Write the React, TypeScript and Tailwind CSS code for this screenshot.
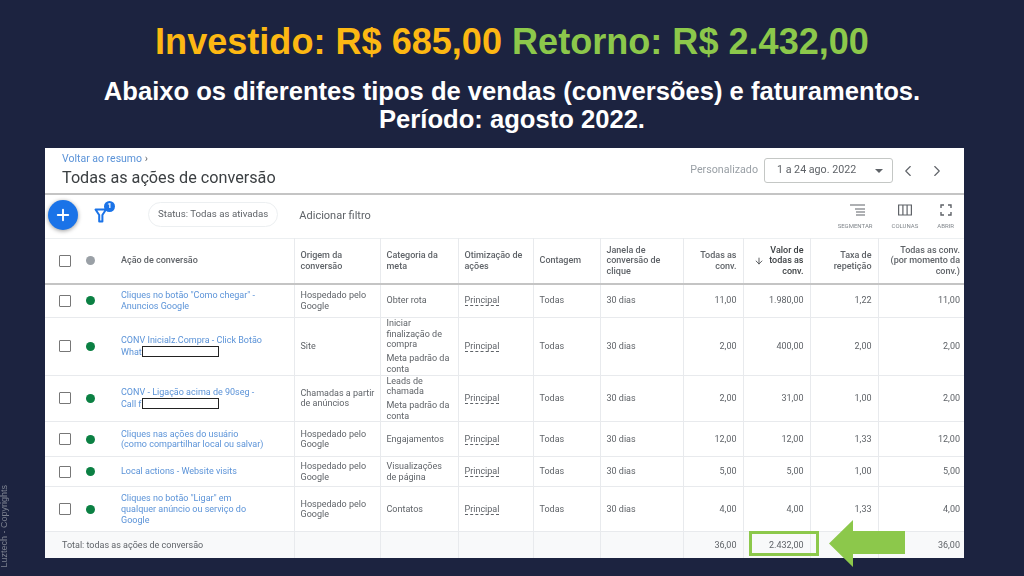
import { ArrowDown, ChevronLeft, ChevronRight, Plus } from "lucide-react";

type Row = {
  name: React.ReactNode;
  origin: React.ReactNode;
  category: React.ReactNode;
  count: string;
  value: string;
  rate: string;
  height: string;
};

const Redacted = () => (
  <span className="inline-block w-[77px] h-[11px] -mb-[2px] bg-white border border-[#222] align-baseline" />
);

const rows: Row[] = [
  {
    name: <>Cliques no botão "Como chegar" -<br />Anuncios Google</>,
    origin: "Hospedado pelo Google",
    category: "Obter rota",
    count: "11,00",
    value: "1.980,00",
    rate: "1,22",
    height: "h-[34px]",
  },
  {
    name: <>CONV Inicialz.Compra - Click Botão<br />What<Redacted /></>,
    origin: "Site",
    category: (
      <>
        Iniciar<br />finalização de<br />compra
        <div className="mt-[3px]">Meta padrão da conta</div>
      </>
    ),
    count: "2,00",
    value: "400,00",
    rate: "2,00",
    height: "h-[57px]",
  },
  {
    name: <>CONV - Ligação acima de 90seg -<br />Call f<Redacted /></>,
    origin: <span className="whitespace-nowrap">Chamadas a partir<br />de anúncios</span>,
    category: (
      <>
        Leads de chamada
        <div className="mt-[3px]">Meta padrão da conta</div>
      </>
    ),
    count: "2,00",
    value: "31,00",
    rate: "1,00",
    height: "h-[46px]",
  },
  {
    name: <>Cliques nas ações do usuário<br />(como compartilhar local ou salvar)</>,
    origin: "Hospedado pelo Google",
    category: "Engajamentos",
    count: "12,00",
    value: "12,00",
    rate: "1,33",
    height: "h-[35px]",
  },
  {
    name: "Local actions - Website visits",
    origin: "Hospedado pelo Google",
    category: "Visualizações de página",
    count: "5,00",
    value: "5,00",
    rate: "1,00",
    height: "h-[30px]",
  },
  {
    name: <>Cliques no botão "Ligar" em<br />qualquer anúncio ou serviço do<br />Google</>,
    origin: "Hospedado pelo Google",
    category: "Contatos",
    count: "4,00",
    value: "4,00",
    rate: "1,33",
    height: "h-[45px]",
  },
];

const Checkbox = () => (
  <span className="block w-[12px] h-[12px] rounded-[1px] border-[1.5px] border-[#777]" />
);

const th = "border-l border-[#e8eaed] px-[6px] font-medium align-middle";
const td = "border-l border-[#e8eaed] px-[6px] align-middle";

function ToolButton({ label, children }: { label: string; children: React.ReactNode }) {
  return (
    <div className="flex flex-col items-center gap-[6px]">
      {children}
      <span className="text-[6px] leading-[7px] text-[#80868b]">{label}</span>
    </div>
  );
}

export default function App() {
  return (
    <div className="relative w-[1024px] h-[576px] overflow-hidden bg-[#1c2340] font-['Liberation_Sans',sans-serif]">
      <div className="pt-[21px] text-center font-bold">
        <h1 className="text-[36.1px] leading-[42px]">
          <span className="text-[#fdb813]">Investido: R$ 685,00</span>{" "}
          <span className="text-[#8cc84b]">Retorno: R$ 2.432,00</span>
        </h1>
        <p className="mt-[14px] text-[25.6px] leading-[28px] text-white">
          Abaixo os diferentes tipos de vendas (conversões) e faturamentos.
          <br />
          Período: agosto 2022.
        </p>
      </div>

      <div className="relative ml-[45px] mt-[15px] w-[919px] h-[409px]">
        <div className="h-full bg-white font-['Roboto',sans-serif] text-[#5f6368] blur-[0.5px]">
          {/* Title bar */}
          <div className="flex h-[47px] items-center border-b-2 border-[#c4c4c4] pl-[17px] pr-[21px]">
            <div>
              <div className="text-[10.5px] leading-[12px] text-[#5b93d8]">
                Voltar ao resumo <span className="text-[#5f6368]">›</span>
              </div>
              <div className="mt-[3px] text-[16.2px] leading-[20px] text-[#3c4043]">Todas as ações de conversão</div>
            </div>
            <div className="ml-auto flex items-center">
              <span className="text-[10.7px] text-[#9aa0a6]">Personalizado</span>
              <div className="ml-[6px] flex h-[25px] w-[129px] items-center rounded-[3px] border border-[#c4c7c5] pl-[12px] pr-[9px] text-[10.7px] text-[#5f6368]">
                1 a 24 ago. 2022
                <span className="ml-auto h-0 w-0 border-x-[4px] border-t-[4px] border-x-transparent border-t-[#5f6368]" />
              </div>
              <ChevronLeft className="ml-[6px] text-[#5f6368]" size={18} strokeWidth={1.5} />
              <ChevronRight className="ml-[11px] -mr-[3px] text-[#5f6368]" size={18} strokeWidth={1.5} />
            </div>
          </div>

          {/* Toolbar */}
          <div className="flex h-[43px] items-center pb-[4px] pl-[3px] pr-[10px]">
            <div className="flex h-[30px] w-[30px] items-center justify-center rounded-full bg-[#1a73e8] text-white shadow-[0_1px_4px_rgba(0,0,0,0.4)]">
              <Plus size={18} strokeWidth={2.5} />
            </div>
            <div className="relative ml-[16px] h-[20px] w-[20px]">
              <svg viewBox="0 0 20 20" className="h-[20px] w-[20px]">
                <path d="M1.5 4.5h10.5L8.4 10v6.5H5.2V10z" fill="none" stroke="#1a73e8" strokeWidth="2" strokeLinejoin="round" />
              </svg>
              <span className="absolute -right-[1px] -top-[4px] flex h-[11px] w-[11px] items-center justify-center rounded-full bg-[#1a73e8] text-[8px] font-bold text-white">
                1
              </span>
            </div>
            <div className="ml-[34px] flex h-[25px] items-center rounded-full border border-[#eceff1] px-[9px] text-[9.7px] text-[#5f6368]">
              Status: Todas as ativadas
            </div>
            <span className="ml-[21px] mt-[3px] text-[11px] text-[#5f6368]">Adicionar filtro</span>
            <div className="ml-auto flex items-end gap-[19px] pt-[4px]">
              <ToolButton label="SEGMENTAR">
                <svg viewBox="0 0 16 12" className="ml-[6px] h-[12px] w-[16px]" fill="none" stroke="#5f6368" strokeWidth="1.2">
                  <path d="M0 1h15M5 5h10M6 8h9M6 11h9" />
                </svg>
              </ToolButton>
              <ToolButton label="COLUNAS">
                <svg viewBox="0 0 14 12" className="h-[12px] w-[14px]" fill="none" stroke="#5f6368" strokeWidth="1.2">
                  <path d="M.6 1h12.8v10H.6zM4.9 1v10M9.1 1v10" />
                </svg>
              </ToolButton>
              <ToolButton label="ABRIR">
                <svg viewBox="0 0 12 12" className="h-[12px] w-[12px]" fill="none" stroke="#5f6368" strokeWidth="1.4">
                  <path d="M1 4V1h3M8 1h3v3M11 8v3H8M4 11H1V8" />
                </svg>
              </ToolButton>
            </div>
          </div>

          {/* Conversion actions table */}
          <table className="w-[919px] table-fixed text-[9px] leading-[10.7px]">
            <colgroup>
              <col className="w-[249px]" />
              <col className="w-[86px]" />
              <col className="w-[78px]" />
              <col className="w-[75px]" />
              <col className="w-[67px]" />
              <col className="w-[83px]" />
              <col className="w-[60px]" />
              <col className="w-[67px]" />
              <col className="w-[68px]" />
              <col className="w-[86px]" />
            </colgroup>
            <thead>
              <tr className="h-[45px] border-y border-b-2 border-t-[#eceff1] border-b-[#c4c4c4] text-left">
                <th className="pl-[14px] font-medium align-middle">
                  <div className="flex items-center">
                    <Checkbox />
                    <span className="ml-[15px] h-[9px] w-[9px] rounded-full bg-[#9aa0a6]" />
                    <span className="ml-[26px]">Ação de conversão</span>
                  </div>
                </th>
                <th className={th}>Origem da conversão</th>
                <th className={th}>Categoria da meta</th>
                <th className={th}>Otimização de ações</th>
                <th className={th}>Contagem</th>
                <th className={th}>Janela de conversão de clique</th>
                <th className={`${th} text-right`}>Todas as conv.</th>
                <th className={`${th} text-right text-[#3c4043]`}>
                  <div className="flex items-center justify-end gap-[5px]">
                    <ArrowDown size={10} className="shrink-0" />
                    <span>
                      Valor de
                      <br />
                      todas as
                      <br />
                      conv.
                    </span>
                  </div>
                </th>
                <th className={`${th} text-right`}>Taxa de repetição</th>
                <th className={`${th} pr-[4px] text-right`}>Todas as conv. (por momento da conv.)</th>
              </tr>
            </thead>
            <tbody>
              {rows.map((row, i) => (
                <tr key={i} className={`${row.height} border-b border-[#e8eaed]`}>
                  <td className="pl-[14px] align-middle">
                    <div className="flex items-center">
                      <span className="shrink-0">
                        <Checkbox />
                      </span>
                      <span className="ml-[15px] h-[9px] w-[9px] shrink-0 rounded-full bg-[#0b8043]" />
                      <span className="ml-[26px] whitespace-nowrap text-[#5b93d8]">{row.name}</span>
                    </div>
                  </td>
                  <td className={td}>{row.origin}</td>
                  <td className={td}>{row.category}</td>
                  <td className={td}>
                    <span className="border-b border-dashed border-[#5f6368]">Principal</span>
                  </td>
                  <td className={td}>Todas</td>
                  <td className={td}>30 dias</td>
                  <td className={`${td} text-right`}>{row.count}</td>
                  <td className={`${td} text-right`}>{row.value}</td>
                  <td className={`${td} text-right`}>{row.rate}</td>
                  <td className={`${td} pr-[4px] text-right`}>{row.count}</td>
                </tr>
              ))}
              <tr className="h-[26px] bg-[#f8f9fa]">
                <td className="pl-[17px]">Total: todas as ações de conversão</td>
                <td className={td} />
                <td className={td} />
                <td className={td} />
                <td className={td} />
                <td className={td} />
                <td className={`${td} text-right`}>36,00</td>
                <td className={`${td} text-right`}>2.432,00</td>
                <td className={td} />
                <td className={`${td} pr-[4px] text-right`}>36,00</td>
              </tr>
            </tbody>
          </table>
        </div>

        {/* Highlight over the total */}
        <div className="absolute left-[704px] top-[383px] h-[25px] w-[70px] border-[3px] border-[#8cc84b]" />
        <svg viewBox="0 0 76 47" className="absolute left-[784px] top-[372px] h-[47px] w-[76px]">
          <path d="M0 23.5 24 0v11h52v23H24v13z" fill="#8cc84b" />
        </svg>
      </div>

      <span className="absolute bottom-[8px] left-[-1px] text-[9px] leading-[10px] text-[#7d8290] [writing-mode:vertical-rl] rotate-180">
        Luztech - Copyrights
      </span>
    </div>
  );
}
